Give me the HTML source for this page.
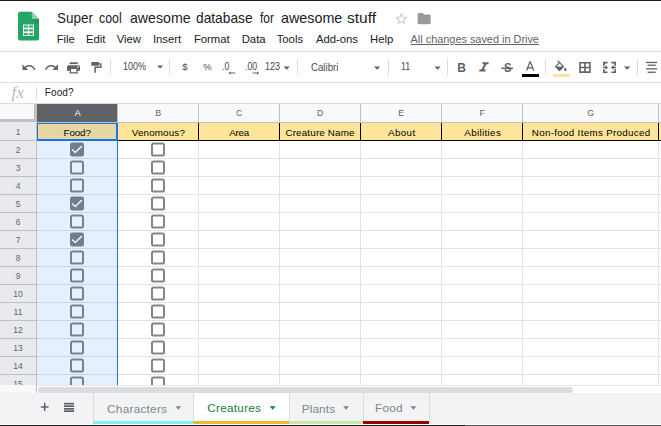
<!DOCTYPE html>
<html><head><meta charset="utf-8"><style>
html,body{margin:0;padding:0;overflow:hidden;}
body{width:661px;height:426px;overflow:hidden;position:relative;background:#fff;font-family:"Liberation Sans", sans-serif;}
.t{position:absolute;white-space:nowrap;line-height:1;}
.r{position:absolute;}
</style></head><body>
<div class="r" style="left:0px;top:0px;width:661px;height:1px;background:#1b1b1b;"></div><div class="r" style="left:0px;top:51px;width:661px;height:1px;background:#dadce0;"></div><div class="r" style="left:0px;top:82px;width:661px;height:1px;background:#dadce0;"></div><div class="r" style="left:0px;top:103px;width:661px;height:1px;background:#dadce0;"></div><div class="t" style="left:56.90px;top:11.38px;font-size:14.2px;color:#202124;transform-origin:0 0;transform:scaleX(0.949);">Super</div><div class="t" style="left:98.60px;top:11.38px;font-size:14.2px;color:#202124;transform-origin:0 0;transform:scaleX(0.870);">cool</div><div class="t" style="left:130.20px;top:11.38px;font-size:14.2px;color:#202124;transform-origin:0 0;transform:scaleX(0.998);">awesome</div><div class="t" style="left:195.90px;top:11.38px;font-size:14.2px;color:#202124;transform-origin:0 0;transform:scaleX(0.969);">database</div><div class="t" style="left:259.60px;top:11.38px;font-size:14.2px;color:#202124;transform-origin:0 0;transform:scaleX(0.844);">for</div><div class="t" style="left:281.20px;top:11.38px;font-size:14.2px;color:#202124;transform-origin:0 0;transform:scaleX(1.009);">awesome</div><div class="t" style="left:347.30px;top:11.38px;font-size:14.2px;color:#202124;transform-origin:0 0;transform:scaleX(1.097);">stuff</div><div class="t" style="left:56.70px;top:34.43px;font-size:11.3px;color:#202124;">File</div><div class="t" style="left:85.90px;top:34.43px;font-size:11.3px;color:#202124;">Edit</div><div class="t" style="left:116.70px;top:34.43px;font-size:11.3px;color:#202124;">View</div><div class="t" style="left:152.90px;top:34.43px;font-size:11.3px;color:#202124;">Insert</div><div class="t" style="left:193.90px;top:34.43px;font-size:11.3px;color:#202124;">Format</div><div class="t" style="left:241.70px;top:34.43px;font-size:11.3px;color:#202124;">Data</div><div class="t" style="left:276.70px;top:34.43px;font-size:11.3px;color:#202124;">Tools</div><div class="t" style="left:315.90px;top:34.43px;font-size:11.3px;color:#202124;">Add-ons</div><div class="t" style="left:370.00px;top:34.43px;font-size:11.3px;color:#202124;">Help</div><div class="t" style="left:410.60px;top:34.17px;font-size:10.9px;color:#5f6368;text-decoration:underline;">All changes saved in Drive</div><div class="t" style="left:44.80px;top:87.83px;font-size:10px;color:#202124;letter-spacing:0.1px;">Food?</div><div class="t" style="left:11.6px;top:85.2px;font-family:'Liberation Serif',serif;font-style:italic;font-size:16.5px;color:#b4b7ba;letter-spacing:0.3px;">fx</div><div class="r" style="left:36px;top:87px;width:1px;height:13px;background:#dadce0;"></div><div class="t" style="left:122.60px;top:61.94px;font-size:10px;color:#474b50;transform-origin:0 0;transform:scaleX(0.896)">100%</div><div class="t" style="left:310.70px;top:63.13px;font-size:10px;color:#474b50;transform-origin:0 0;transform:scaleX(0.967)">Calibri</div><div class="t" style="left:400.50px;top:61.94px;font-size:10px;color:#474b50;transform-origin:0 0;transform:scaleX(0.89)">11</div><div class="t" style="left:265.10px;top:61.94px;font-size:10px;color:#474b50;transform-origin:0 0;transform:scaleX(0.905)">123</div><div class="t" style="left:182.20px;top:62.47px;font-size:9.6px;color:#474b50;">$</div><div class="t" style="left:203.20px;top:62.24px;font-size:9.4px;color:#474b50;">%</div><div class="t" style="left:222.30px;top:61.94px;font-size:10px;color:#474b50;transform-origin:0 0;transform:scaleX(0.877)">.0</div><div class="t" style="left:244.60px;top:61.94px;font-size:10px;color:#474b50;transform-origin:0 0;transform:scaleX(0.872)">.00</div><div class="t" style="left:457.30px;top:61.94px;font-size:12px;color:#5f6368;font-weight:bold;">B</div><div class="t" style="left:503.60px;top:63.13px;font-size:11.9px;color:#5f6368;font-weight:bold;transform-origin:0 0;transform:scaleX(0.95);">S</div><div class="r" style="left:110px;top:59px;width:1px;height:16px;background:#dadce0;"></div><div class="r" style="left:169px;top:59px;width:1px;height:16px;background:#dadce0;"></div><div class="r" style="left:297px;top:59px;width:1px;height:16px;background:#dadce0;"></div><div class="r" style="left:388px;top:59px;width:1px;height:16px;background:#dadce0;"></div><div class="r" style="left:447px;top:59px;width:1px;height:16px;background:#dadce0;"></div><div class="r" style="left:545px;top:59px;width:1px;height:16px;background:#dadce0;"></div><div class="r" style="left:637px;top:59px;width:1px;height:16px;background:#dadce0;"></div><div class="r" style="left:0px;top:104px;width:34px;height:15px;background:#f8f9fa;"></div><div class="r" style="left:0px;top:119px;width:37px;height:3px;background:#c0c0c0;"></div><div class="r" style="left:34px;top:104px;width:3px;height:18px;background:#c0c0c0;"></div><div class="r" style="left:37px;top:104px;width:624px;height:18px;background:#f8f9fa;"></div><div class="r" style="left:37px;top:104px;width:80px;height:18px;background:#5f6368;"></div><div class="r" style="left:37px;top:122px;width:624px;height:1px;background:#c0c0c0;"></div><div class="r" style="left:117px;top:104px;width:1px;height:18px;background:#c0c0c0;"></div><div class="r" style="left:198px;top:104px;width:1px;height:18px;background:#c0c0c0;"></div><div class="r" style="left:279px;top:104px;width:1px;height:18px;background:#c0c0c0;"></div><div class="r" style="left:360px;top:104px;width:1px;height:18px;background:#c0c0c0;"></div><div class="r" style="left:441px;top:104px;width:1px;height:18px;background:#c0c0c0;"></div><div class="r" style="left:522px;top:104px;width:1px;height:18px;background:#c0c0c0;"></div><div class="r" style="left:658px;top:104px;width:1px;height:18px;background:#c0c0c0;"></div><div class="t" style="left:37px;width:80px;top:108.85px;font-size:8.8px;text-align:center;text-indent:1.5px;color:#fff">A</div><div class="t" style="left:117px;width:81px;top:108.85px;font-size:8.8px;text-align:center;text-indent:1.5px;color:#5f6368">B</div><div class="t" style="left:198px;width:81px;top:108.85px;font-size:8.8px;text-align:center;text-indent:1.5px;color:#5f6368">C</div><div class="t" style="left:279px;width:81px;top:108.85px;font-size:8.8px;text-align:center;text-indent:1.5px;color:#5f6368">D</div><div class="t" style="left:360px;width:81px;top:108.85px;font-size:8.8px;text-align:center;text-indent:1.5px;color:#5f6368">E</div><div class="t" style="left:441px;width:81px;top:108.85px;font-size:8.8px;text-align:center;text-indent:1.5px;color:#5f6368">F</div><div class="t" style="left:522px;width:136px;top:108.85px;font-size:8.8px;text-align:center;text-indent:1.5px;color:#5f6368">G</div><div class="r" style="left:0px;top:122px;width:36px;height:263px;background:#e8eaed;"></div><div class="r" style="left:36px;top:122px;width:1px;height:271px;background:#c0c0c0;"></div><div class="t" style="left:0;width:36px;top:127.50px;font-size:8.5px;text-align:center;color:#5f6368">1</div><div class="r" style="left:0px;top:140px;width:36px;height:1px;background:#c0c0c0;"></div><div class="t" style="left:0;width:36px;top:145.50px;font-size:8.5px;text-align:center;color:#5f6368">2</div><div class="r" style="left:0px;top:158px;width:36px;height:1px;background:#c0c0c0;"></div><div class="t" style="left:0;width:36px;top:163.50px;font-size:8.5px;text-align:center;color:#5f6368">3</div><div class="r" style="left:0px;top:176px;width:36px;height:1px;background:#c0c0c0;"></div><div class="t" style="left:0;width:36px;top:181.50px;font-size:8.5px;text-align:center;color:#5f6368">4</div><div class="r" style="left:0px;top:194px;width:36px;height:1px;background:#c0c0c0;"></div><div class="t" style="left:0;width:36px;top:199.50px;font-size:8.5px;text-align:center;color:#5f6368">5</div><div class="r" style="left:0px;top:212px;width:36px;height:1px;background:#c0c0c0;"></div><div class="t" style="left:0;width:36px;top:217.50px;font-size:8.5px;text-align:center;color:#5f6368">6</div><div class="r" style="left:0px;top:230px;width:36px;height:1px;background:#c0c0c0;"></div><div class="t" style="left:0;width:36px;top:235.50px;font-size:8.5px;text-align:center;color:#5f6368">7</div><div class="r" style="left:0px;top:248px;width:36px;height:1px;background:#c0c0c0;"></div><div class="t" style="left:0;width:36px;top:253.50px;font-size:8.5px;text-align:center;color:#5f6368">8</div><div class="r" style="left:0px;top:266px;width:36px;height:1px;background:#c0c0c0;"></div><div class="t" style="left:0;width:36px;top:271.50px;font-size:8.5px;text-align:center;color:#5f6368">9</div><div class="r" style="left:0px;top:284px;width:36px;height:1px;background:#c0c0c0;"></div><div class="t" style="left:0;width:36px;top:289.50px;font-size:8.5px;text-align:center;color:#5f6368">10</div><div class="r" style="left:0px;top:302px;width:36px;height:1px;background:#c0c0c0;"></div><div class="t" style="left:0;width:36px;top:307.50px;font-size:8.5px;text-align:center;color:#5f6368">11</div><div class="r" style="left:0px;top:320px;width:36px;height:1px;background:#c0c0c0;"></div><div class="t" style="left:0;width:36px;top:325.50px;font-size:8.5px;text-align:center;color:#5f6368">12</div><div class="r" style="left:0px;top:338px;width:36px;height:1px;background:#c0c0c0;"></div><div class="t" style="left:0;width:36px;top:343.50px;font-size:8.5px;text-align:center;color:#5f6368">13</div><div class="r" style="left:0px;top:356px;width:36px;height:1px;background:#c0c0c0;"></div><div class="t" style="left:0;width:36px;top:361.50px;font-size:8.5px;text-align:center;color:#5f6368">14</div><div class="r" style="left:0px;top:374px;width:36px;height:1px;background:#c0c0c0;"></div><div class="t" style="left:0;width:36px;top:379.50px;font-size:8.5px;text-align:center;color:#5f6368">15</div><div class="r" style="left:37px;top:123px;width:624px;height:262px;background:#ffffff;"></div><div class="r" style="left:37px;top:123px;width:624px;height:17px;background:#ffe599;"></div><div class="r" style="left:37px;top:140px;width:624px;height:1px;background:#e2e3e3;"></div><div class="r" style="left:37px;top:158px;width:624px;height:1px;background:#e2e3e3;"></div><div class="r" style="left:37px;top:176px;width:624px;height:1px;background:#e2e3e3;"></div><div class="r" style="left:37px;top:194px;width:624px;height:1px;background:#e2e3e3;"></div><div class="r" style="left:37px;top:212px;width:624px;height:1px;background:#e2e3e3;"></div><div class="r" style="left:37px;top:230px;width:624px;height:1px;background:#e2e3e3;"></div><div class="r" style="left:37px;top:248px;width:624px;height:1px;background:#e2e3e3;"></div><div class="r" style="left:37px;top:266px;width:624px;height:1px;background:#e2e3e3;"></div><div class="r" style="left:37px;top:284px;width:624px;height:1px;background:#e2e3e3;"></div><div class="r" style="left:37px;top:302px;width:624px;height:1px;background:#e2e3e3;"></div><div class="r" style="left:37px;top:320px;width:624px;height:1px;background:#e2e3e3;"></div><div class="r" style="left:37px;top:338px;width:624px;height:1px;background:#e2e3e3;"></div><div class="r" style="left:37px;top:356px;width:624px;height:1px;background:#e2e3e3;"></div><div class="r" style="left:37px;top:374px;width:624px;height:1px;background:#e2e3e3;"></div><div class="r" style="left:117px;top:123px;width:1px;height:262px;background:#e2e3e3;"></div><div class="r" style="left:198px;top:123px;width:1px;height:262px;background:#e2e3e3;"></div><div class="r" style="left:279px;top:123px;width:1px;height:262px;background:#e2e3e3;"></div><div class="r" style="left:360px;top:123px;width:1px;height:262px;background:#e2e3e3;"></div><div class="r" style="left:441px;top:123px;width:1px;height:262px;background:#e2e3e3;"></div><div class="r" style="left:522px;top:123px;width:1px;height:262px;background:#e2e3e3;"></div><div class="r" style="left:658px;top:123px;width:1px;height:262px;background:#e2e3e3;"></div><div class="r" style="left:37px;top:140px;width:624px;height:1px;background:#000;"></div><div class="r" style="left:117px;top:123px;width:1px;height:18px;background:#000;"></div><div class="r" style="left:198px;top:123px;width:1px;height:18px;background:#000;"></div><div class="r" style="left:279px;top:123px;width:1px;height:18px;background:#000;"></div><div class="r" style="left:360px;top:123px;width:1px;height:18px;background:#000;"></div><div class="r" style="left:441px;top:123px;width:1px;height:18px;background:#000;"></div><div class="r" style="left:522px;top:123px;width:1px;height:18px;background:#000;"></div><div class="r" style="left:658px;top:123px;width:1px;height:18px;background:#000;"></div><div class="t" style="left:63.60px;top:128.10px;font-size:9.8px;color:#000;letter-spacing:-0.133px;">Food?</div><div class="t" style="left:131.80px;top:128.10px;font-size:9.8px;color:#000;letter-spacing:0.163px;">Venomous?</div><div class="t" style="left:229.30px;top:128.10px;font-size:9.8px;color:#000;letter-spacing:-0.248px;">Area</div><div class="t" style="left:285.40px;top:128.10px;font-size:9.8px;color:#000;letter-spacing:0.181px;">Creature Name</div><div class="t" style="left:388.10px;top:128.10px;font-size:9.8px;color:#000;letter-spacing:0.355px;">About</div><div class="t" style="left:464.30px;top:128.10px;font-size:9.8px;color:#000;letter-spacing:0.343px;">Abilities</div><div class="t" style="left:531.80px;top:128.10px;font-size:9.8px;color:#000;letter-spacing:0.31px;">Non-food Items Produced</div><svg class="r" style="left:0;top:0" width="661" height="385" viewBox="0 0 661 385"><g transform="translate(70 142.5)"><rect x="0" y="0" width="14" height="14" rx="2.2" fill="#7e8185"/><path d="M2.2 7.2 L5.3 10 L11.8 3.6" stroke="#fff" stroke-width="1.6" fill="none"/></g><g transform="translate(151 142.5)"><rect x="1" y="1" width="12" height="12" rx="1.6" fill="none" stroke="#858585" stroke-width="2"/></g><g transform="translate(70 160.5)"><rect x="1" y="1" width="12" height="12" rx="1.6" fill="none" stroke="#858585" stroke-width="2"/></g><g transform="translate(151 160.5)"><rect x="1" y="1" width="12" height="12" rx="1.6" fill="none" stroke="#858585" stroke-width="2"/></g><g transform="translate(70 178.5)"><rect x="1" y="1" width="12" height="12" rx="1.6" fill="none" stroke="#858585" stroke-width="2"/></g><g transform="translate(151 178.5)"><rect x="1" y="1" width="12" height="12" rx="1.6" fill="none" stroke="#858585" stroke-width="2"/></g><g transform="translate(70 196.5)"><rect x="0" y="0" width="14" height="14" rx="2.2" fill="#7e8185"/><path d="M2.2 7.2 L5.3 10 L11.8 3.6" stroke="#fff" stroke-width="1.6" fill="none"/></g><g transform="translate(151 196.5)"><rect x="1" y="1" width="12" height="12" rx="1.6" fill="none" stroke="#858585" stroke-width="2"/></g><g transform="translate(70 214.5)"><rect x="1" y="1" width="12" height="12" rx="1.6" fill="none" stroke="#858585" stroke-width="2"/></g><g transform="translate(151 214.5)"><rect x="1" y="1" width="12" height="12" rx="1.6" fill="none" stroke="#858585" stroke-width="2"/></g><g transform="translate(70 232.5)"><rect x="0" y="0" width="14" height="14" rx="2.2" fill="#7e8185"/><path d="M2.2 7.2 L5.3 10 L11.8 3.6" stroke="#fff" stroke-width="1.6" fill="none"/></g><g transform="translate(151 232.5)"><rect x="1" y="1" width="12" height="12" rx="1.6" fill="none" stroke="#858585" stroke-width="2"/></g><g transform="translate(70 250.5)"><rect x="1" y="1" width="12" height="12" rx="1.6" fill="none" stroke="#858585" stroke-width="2"/></g><g transform="translate(151 250.5)"><rect x="1" y="1" width="12" height="12" rx="1.6" fill="none" stroke="#858585" stroke-width="2"/></g><g transform="translate(70 268.5)"><rect x="1" y="1" width="12" height="12" rx="1.6" fill="none" stroke="#858585" stroke-width="2"/></g><g transform="translate(151 268.5)"><rect x="1" y="1" width="12" height="12" rx="1.6" fill="none" stroke="#858585" stroke-width="2"/></g><g transform="translate(70 286.5)"><rect x="1" y="1" width="12" height="12" rx="1.6" fill="none" stroke="#858585" stroke-width="2"/></g><g transform="translate(151 286.5)"><rect x="1" y="1" width="12" height="12" rx="1.6" fill="none" stroke="#858585" stroke-width="2"/></g><g transform="translate(70 304.5)"><rect x="1" y="1" width="12" height="12" rx="1.6" fill="none" stroke="#858585" stroke-width="2"/></g><g transform="translate(151 304.5)"><rect x="1" y="1" width="12" height="12" rx="1.6" fill="none" stroke="#858585" stroke-width="2"/></g><g transform="translate(70 322.5)"><rect x="1" y="1" width="12" height="12" rx="1.6" fill="none" stroke="#858585" stroke-width="2"/></g><g transform="translate(151 322.5)"><rect x="1" y="1" width="12" height="12" rx="1.6" fill="none" stroke="#858585" stroke-width="2"/></g><g transform="translate(70 340.5)"><rect x="1" y="1" width="12" height="12" rx="1.6" fill="none" stroke="#858585" stroke-width="2"/></g><g transform="translate(151 340.5)"><rect x="1" y="1" width="12" height="12" rx="1.6" fill="none" stroke="#858585" stroke-width="2"/></g><g transform="translate(70 358.5)"><rect x="1" y="1" width="12" height="12" rx="1.6" fill="none" stroke="#858585" stroke-width="2"/></g><g transform="translate(151 358.5)"><rect x="1" y="1" width="12" height="12" rx="1.6" fill="none" stroke="#858585" stroke-width="2"/></g><g transform="translate(70 376.5)"><rect x="1" y="1" width="12" height="12" rx="1.6" fill="none" stroke="#858585" stroke-width="2"/></g><g transform="translate(151 376.5)"><rect x="1" y="1" width="12" height="12" rx="1.6" fill="none" stroke="#858585" stroke-width="2"/></g></svg><div class="r" style="left:37px;top:123px;width:81px;height:262px;background:rgba(14,101,235,0.1)"></div><div class="r" style="left:37px;top:123px;width:81px;height:1.4px;background:#1a73e8;"></div><div class="r" style="left:37px;top:123px;width:1.2px;height:18px;background:#1a73e8;"></div><div class="r" style="left:116px;top:123px;width:2px;height:18px;background:#1a73e8;"></div><div class="r" style="left:37px;top:139px;width:81px;height:2px;background:#1a73e8;"></div><div class="r" style="left:116.8px;top:123px;width:1.3px;height:262px;background:#1a73e8;"></div><div class="r" style="left:0px;top:385px;width:661px;height:8px;background:#ffffff;"></div><div class="r" style="left:0px;top:385px;width:36px;height:8px;background:#f8f9fa;"></div><div class="r" style="left:36px;top:385px;width:1px;height:8px;background:#c0c0c0;"></div><div class="r" style="left:37px;top:385px;width:624px;height:1px;background:#e6e6e6;"></div><div class="r" style="left:38px;top:386.8px;width:535px;height:6.2px;background:#dadce0;border-radius:3.1px"></div><div class="r" style="left:0px;top:393px;width:661px;height:31px;background:#f1f3f4;"></div><div class="r" style="left:0px;top:424px;width:661px;height:1px;background:#ffffff;"></div><div class="r" style="left:0px;top:425px;width:465px;height:1px;background:#1b1b1b;"></div><div class="r" style="left:465px;top:425px;width:196px;height:1px;background:#5c5c5c;"></div><div class="r" style="left:93px;top:393px;width:101px;height:31px;background:#f1f3f4;"></div><div class="r" style="left:93px;top:393px;width:1px;height:31px;background:#dadce0;"></div><div class="r" style="left:93px;top:421px;width:101px;height:3px;background:#84eff7;"></div><div class="t" style="left:107.10px;top:403.81px;font-size:11.8px;color:#80868b;letter-spacing:0.245px;">Characters</div><div class="r" style="left:194px;top:393px;width:95px;height:31px;background:#ffffff;"></div><div class="r" style="left:194px;top:421px;width:95px;height:3px;background:#f3b72a;"></div><div class="t" style="left:207.30px;top:403.01px;font-size:11.8px;color:#188038;letter-spacing:0.238px;">Creatures</div><div class="r" style="left:289px;top:393px;width:74px;height:31px;background:#f1f3f4;"></div><div class="r" style="left:289px;top:393px;width:1px;height:31px;background:#dadce0;"></div><div class="r" style="left:289px;top:421px;width:74px;height:3px;background:#c8e6b0;"></div><div class="t" style="left:301.70px;top:403.81px;font-size:11.8px;color:#80868b;letter-spacing:0.122px;">Plants</div><div class="r" style="left:363px;top:393px;width:66px;height:31px;background:#f1f3f4;"></div><div class="r" style="left:363px;top:393px;width:1px;height:31px;background:#dadce0;"></div><div class="r" style="left:363px;top:421px;width:66px;height:3px;background:#990000;"></div><div class="t" style="left:375.10px;top:403.01px;font-size:11.8px;color:#80868b;letter-spacing:0.191px;">Food</div><div class="r" style="left:429px;top:393px;width:1px;height:31px;background:#dadce0;"></div><div class="r" style="left:193px;top:393px;width:1px;height:28px;background:#dadce0;"></div><svg class="r" style="left:0;top:0" width="661" height="426" viewBox="0 0 661 426"><path d="M20 11.8 H31.8 L39 19 V38.6 Q39 40.6 37 40.6 H20 Q18 40.6 18 38.6 V13.8 Q18 11.8 20 11.8 Z" fill="#23a566"/><path d="M31.8 11.8 L39 19 H33.3 Q31.8 19 31.8 17.5 Z" fill="#8ed1b1"/><path d="M32.8 19 L39 25.2 V19 Z" fill="#1a8a52" opacity="0.55"/><rect x="23" y="24.5" width="11" height="11.5" fill="#f1f8f4"/><rect x="24" y="25.6" width="3.9" height="1.9" fill="#23a566"/><rect x="29.1" y="25.6" width="3.9" height="1.9" fill="#23a566"/><rect x="24" y="29.4" width="3.9" height="1.9" fill="#23a566"/><rect x="29.1" y="29.4" width="3.9" height="1.9" fill="#23a566"/><rect x="24" y="33.2" width="3.9" height="1.9" fill="#23a566"/><rect x="29.1" y="33.2" width="3.9" height="1.9" fill="#23a566"/><path transform="translate(393.9 11.24) scale(0.63 0.63)" d="M22 9.24l-7.19-.62L12 2 9.19 8.63 2 9.24l5.46 4.73L5.82 21 12 17.27 18.18 21l-1.63-7.03L22 9.24zM12 15.4l-3.76 2.27 1-4.28-3.32-2.88 4.38-.38L12 6.1l1.71 4.04 4.38.38-3.32 2.88 1 4.28L12 15.4z" fill="#c6c8ca" /><path transform="translate(416.3 10.2) scale(0.655 0.7)" d="M10 4H4c-1.1 0-1.99.9-1.99 2L2 18c0 1.1.9 2 2 2h16c1.1 0 2-.9 2-2V8c0-1.1-.9-2-2-2h-8l-2-2z" fill="#979ba0" /><path transform="translate(21.2 59.9) scale(0.635 0.635)" d="M12.5 8c-2.65 0-5.05.99-6.9 2.6L2 7v9h9l-3.62-3.62c1.39-1.16 3.16-1.88 5.12-1.88 3.54 0 6.55 2.31 7.6 5.5l2.37-.78C21.08 11.03 17.15 8 12.5 8z" fill="#5f6368" /><path transform="translate(44.0 59.9) scale(0.635 0.635)" d="M18.4 10.6C16.55 8.99 14.15 8 11.5 8c-4.65 0-8.58 3.03-9.96 7.22L3.9 16c1.05-3.19 4.05-5.5 7.6-5.5 1.95 0 3.73.72 5.12 1.88L13 16h9V7l-3.6 3.6z" fill="#5f6368" /><rect x="69.7" y="62.3" width="8" height="1.8" fill="#5f6368"/><path d="M68.5 65.2 H78.5 Q80 65.2 80 66.7 V70.8 H77.7 V73.5 H69.7 V70.8 H67 V66.7 Q67 65.2 68.5 65.2 Z M71 69 V72.2 H76.4 V69 Z" fill="#5f6368" fill-rule="evenodd"/><rect x="77.3" y="66.4" width="1.3" height="1.3" fill="#fff"/><rect x="91.3" y="62.1" width="8" height="3.7" rx="0.6" fill="#5f6368"/><path d="M99.3 63.3 H101.6 V67.9 H95.9 V72.8 H94.3 V66.6 H100.2 V64.6 H99.3 Z" fill="#5f6368"/><path d="M157 65.4 h6.2 l-3.1 3.2 z" fill="#5f6368"/><path d="M283.5 66.5 h6.2 l-3.1 3.2 z" fill="#5f6368"/><path d="M374 66.5 h6.2 l-3.1 3.2 z" fill="#5f6368"/><path d="M434.5 66.5 h6.2 l-3.1 3.2 z" fill="#5f6368"/><path d="M624 66.5 h6.2 l-3.1 3.2 z" fill="#5f6368"/><path d="M228.6 73.05 l2 -1.6 v1.05 h4.7 v1.1 h-4.7 v1.05 z" fill="#5f6368"/><path d="M259.2 73.05 l-2 -1.6 v1.05 h-4.6 v1.1 h4.6 v1.05 z" fill="#5f6368"/><path transform="translate(474.65000000000003 59.52) scale(0.775 0.67)" d="M10 4v3h2.21l-3.42 8H6v3h8v-3h-2.21l3.42-8H18V4z" fill="#5f6368" /><rect x="501.3" y="67.6" width="11.7" height="1.4" fill="#5f6368"/><path transform="translate(522.3249999999999 59.349999999999994) scale(0.65 0.65)" d="M11 3L5.5 17h2.25l1.12-3h6.25l1.12 3h2.25L13 3h-2zm-1.38 9L12 5.67 14.38 12H9.62z" fill="#5f6368" /><rect x="522" y="74" width="17" height="3" fill="#000"/><path transform="translate(553.1840000000001 60.2) scale(0.64 0.64)" d="M16.56 8.94L7.62 0 6.21 1.41l2.38 2.38-5.15 5.15c-.59.59-.59 1.54 0 2.12l5.5 5.5c.29.29.68.44 1.06.44s.77-.15 1.06-.44l5.5-5.5c.59-.58.59-1.53 0-2.12zM5.21 10L10 5.21 14.79 10H5.21zM19 11.5s-2 2.17-2 3.5c0 1.1.9 2 2 2s2-.9 2-2c0-1.33-2-3.5-2-3.5z" fill="#5f6368" /><rect x="553" y="74" width="17" height="2.8" fill="#fde293"/><path fill-rule="evenodd" fill="#5f6368" d="M579.2 62 h11.5 v10.9 h-11.5 z M580.8000000000001 63.6 h3.3499999999999996 v3.05 h-3.3499999999999996 z M585.7500000000001 63.6 h3.3499999999999996 v3.05 h-3.3499999999999996 z M580.8000000000001 68.25 h3.3499999999999996 v3.05 h-3.3499999999999996 z M585.7500000000001 68.25 h3.3499999999999996 v3.05 h-3.3499999999999996 z"/><path d="M603 61.8 h4.6 v1.7 h-2.9 v2.2 h-1.7 z M616 61.8 h-4.6 v1.7 h2.9 v2.2 h1.7 z M603 73.1 h4.6 v-1.7 h-2.9 v-2.2 h-1.7 z M616 73.1 h-4.6 v-1.7 h2.9 v-2.2 h1.7 z M603 66.65 h2.5 v-1.6 l2.5 2.4 -2.5 2.4 v-1.6 h-2.5 z M616 66.65 h-2.5 v-1.6 l-2.5 2.4 2.5 2.4 v-1.6 h2.5 z" fill="#5f6368"/><rect x="646" y="61.8" width="11.2" height="1.3" fill="#5f6368"/><rect x="647.6" y="64.6" width="8.1" height="1.3" fill="#5f6368"/><rect x="646" y="68.2" width="11.2" height="1.3" fill="#5f6368"/><rect x="647.6" y="71.6" width="8.1" height="1.3" fill="#5f6368"/><path d="M40.8 406.2 h7.7 v1.5 h-7.7 z M43.9 402.8 h1.5 v8.2 h-1.5 z" fill="#5f6368"/><rect x="64" y="402.8" width="10.1" height="1.7" fill="#5f6368"/><rect x="64" y="405.3" width="10.1" height="1.7" fill="#5f6368"/><rect x="64" y="408.0" width="10.1" height="1.7" fill="#5f6368"/><rect x="64" y="410.3" width="10.1" height="1.7" fill="#5f6368"/><path d="M175.3 406.3 h6 l-3 3.4 z" fill="#80868b"/><path d="M269.7 406.3 h6 l-3 3.4 z" fill="#188038"/><path d="M343.1 406.3 h6 l-3 3.4 z" fill="#80868b"/><path d="M410.4 406.3 h6 l-3 3.4 z" fill="#80868b"/></svg>
</body></html>
